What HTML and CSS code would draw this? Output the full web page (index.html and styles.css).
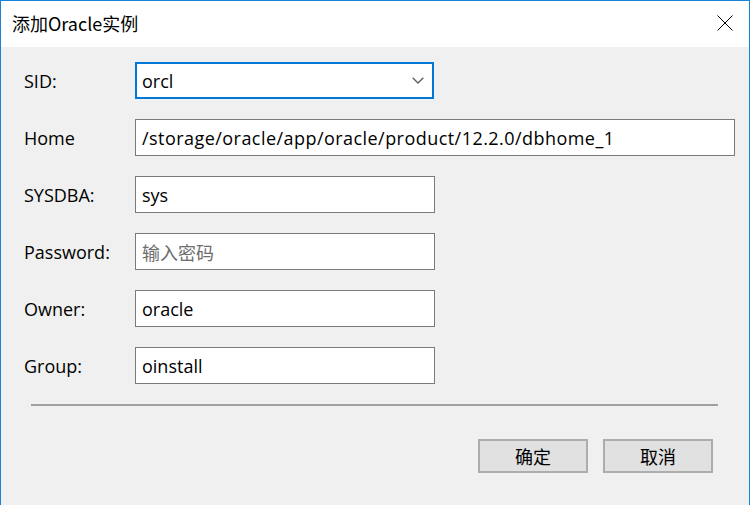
FILE: index.html
```html
<!DOCTYPE html>
<html lang="zh">
<head>
<meta charset="utf-8">
<title>添加Oracle实例</title>
<link rel="stylesheet" href="styles.css">
</head>
<body>
<div class="dialog">
  <div class="titlebar">
    <span class="title">添加Oracle实例</span>
    <span class="close" aria-label="关闭">
      <svg width="16" height="16" viewBox="0 0 16 16"><path d="M0.5 0.5 L15.5 15.5 M15.5 0.5 L0.5 15.5" stroke="#000" stroke-width="1" fill="none"/></svg>
    </span>
  </div>
  <div class="body">
    <div class="form">
      <div class="row">
        <div class="label">SID:</div>
        <div class="field combo focused">
          <span class="value">orcl</span>
          <svg class="chevron" width="12" height="7" viewBox="0 0 12 7"><path d="M0.7 0.7 L6 6 L11.3 0.7" stroke="#606060" stroke-width="1.4" fill="none"/></svg>
        </div>
      </div>
      <div class="row">
        <div class="label">Home</div>
        <div class="field wide"><span class="value path">/storage/oracle/app/oracle/product/12.2.0/dbhome_1</span></div>
      </div>
      <div class="row">
        <div class="label">SYSDBA:</div>
        <div class="field"><span class="value">sys</span></div>
      </div>
      <div class="row">
        <div class="label">Password:</div>
        <div class="field"><span class="value placeholder">输入密码</span></div>
      </div>
      <div class="row">
        <div class="label">Owner:</div>
        <div class="field"><span class="value">oracle</span></div>
      </div>
      <div class="row">
        <div class="label">Group:</div>
        <div class="field"><span class="value">oinstall</span></div>
      </div>
    </div>
    <div class="separator"></div>
    <div class="buttons">
      <button class="btn">确定</button>
      <button class="btn">取消</button>
    </div>
  </div>
</div>
</body>
</html>
```
FILE: styles.css
```css
html, body {
  margin: 0;
  padding: 0;
  background: #ffffff;
}
body {
  width: 751px;
  height: 505px;
  overflow: hidden;
  font-family: "Open Sans", "Noto Sans CJK SC", sans-serif;
}
.dialog {
  width: 748px;
  height: 504px;
  border: 1px solid #1883d7;
  border-bottom: none;
  display: flex;
  flex-direction: column;
  background: #f0f0f0;
}
.titlebar {
  height: 46px;
  background: #ffffff;
  display: flex;
  align-items: center;
  justify-content: space-between;
  padding: 0 16px 0 11px;
}
.title {
  font-family: "Noto Sans CJK SC", sans-serif;
  font-size: 18px;
  color: #000;
  font-weight: 400;
  margin-top: -2px;
}
.close {
  display: flex;
  width: 16px;
  height: 16px;
  margin-top: -2px;
}
.body {
  flex: 1;
  padding: 15px 0 0 23px;
  display: flex;
  flex-direction: column;
}
.form {
  display: flex;
  flex-direction: column;
  gap: 20px;
}
.row {
  display: flex;
  align-items: center;
  height: 37px;
}
.label {
  width: 111px;
  font-size: 18px;
  color: #000;
}
.field {
  box-sizing: border-box;
  width: 300px;
  height: 37px;
  background: #fff;
  border: 1px solid #7a7a7a;
  display: flex;
  align-items: center;
  padding: 0 6px;
}
.field.wide {
  width: 600px;
}
.field.combo {
  width: 299px;
  justify-content: space-between;
  padding-right: 8px;
}
.field.focused {
  border: 2px solid #0078d7;
  padding-left: 5px;
}
.value {
  font-size: 18px;
  color: #000;
  white-space: nowrap;
}
.path {
  letter-spacing: 0.45px;
}
.placeholder {
  font-family: "Noto Sans CJK SC", sans-serif;
  color: #6d6d6d;
}
.separator {
  margin: 20px 0 0 7px;
  width: 687px;
  height: 2px;
  background: #a0a0a0;
}
.buttons {
  display: flex;
  gap: 15px;
  margin: 33px 36px 0 0;
  justify-content: flex-end;
}
.btn {
  box-sizing: border-box;
  width: 110px;
  height: 34px;
  background: #e1e1e1;
  border: 2px solid #adadad;
  font-family: "Noto Sans CJK SC", sans-serif;
  font-size: 18px;
  color: #000;
  padding: 0;
}
```
